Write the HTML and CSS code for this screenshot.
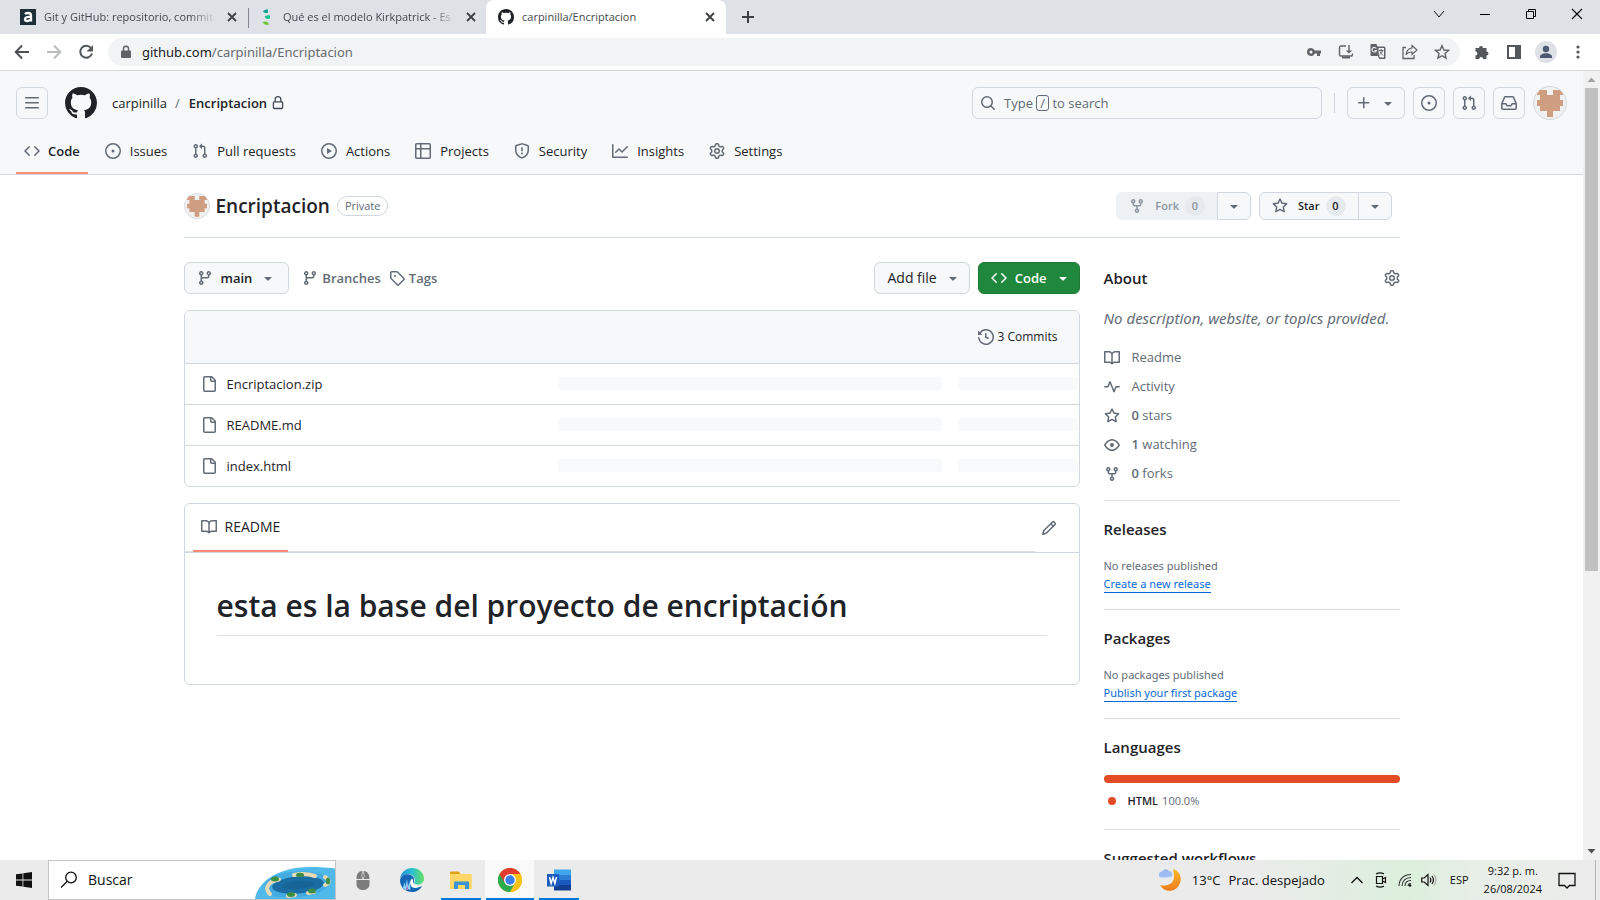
FILE: index.html
```html
<!DOCTYPE html>
<html lang="es">
<head>
<meta charset="utf-8">
<title>carpinilla/Encriptacion</title>
<link rel="stylesheet" href="styles.css">
</head>
<body>
<svg class="sprite" aria-hidden="true">
  <symbol id="menu" viewBox="0 0 16 16"><path d="M1 2.75A.75.75 0 0 1 1.75 2h12.5a.75.75 0 0 1 0 1.5H1.75A.75.75 0 0 1 1 2.75Zm0 5A.75.75 0 0 1 1.75 7h12.5a.75.75 0 0 1 0 1.5H1.75A.75.75 0 0 1 1 7.75ZM1.75 12h12.5a.75.75 0 0 1 0 1.5H1.75a.75.75 0 0 1 0-1.5Z"/></symbol>
  <symbol id="github" viewBox="0 0 16 16"><path d="M8 0c4.42 0 8 3.58 8 8a8.013 8.013 0 0 1-5.45 7.59c-.4.08-.55-.17-.55-.38 0-.27.01-1.13.01-2.2 0-.75-.25-1.23-.54-1.48 1.78-.2 3.65-.88 3.65-3.95 0-.88-.31-1.59-.82-2.15.08-.2.36-1.02-.08-2.12 0 0-.67-.22-2.2.82-.64-.18-1.32-.27-2-.27-.68 0-1.36.09-2 .27-1.53-1.03-2.2-.82-2.2-.82-.44 1.1-.16 1.92-.08 2.12-.51.56-.82 1.28-.82 2.15 0 3.06 1.86 3.75 3.64 3.95-.23.2-.44.55-.51 1.07-.46.21-1.61.55-2.33-.66-.15-.24-.6-.83-1.23-.82-.67.01-.27.38.01.53.34.19.73.9.82 1.13.16.45.68 1.31 2.69.94 0 .67.01 1.3.01 1.49 0 .21-.15.45-.55.38A7.995 7.995 0 0 1 0 8c0-4.42 3.58-8 8-8Z"/></symbol>
  <symbol id="code" viewBox="0 0 16 16"><path d="m11.28 3.22 4.25 4.25a.75.75 0 0 1 0 1.06l-4.25 4.25a.749.749 0 0 1-1.275-.326.749.749 0 0 1 .215-.734L13.94 8l-3.72-3.72a.749.749 0 0 1 .326-1.275.749.749 0 0 1 .734.215Zm-6.56 0a.751.751 0 0 1 1.042.018.751.751 0 0 1 .018 1.042L2.06 8l3.72 3.72a.749.749 0 0 1-.326 1.275.749.749 0 0 1-.734-.215L.47 8.53a.75.75 0 0 1 0-1.06Z"/></symbol>
  <symbol id="issue" viewBox="0 0 16 16"><path d="M8 9.5a1.5 1.5 0 1 0 0-3 1.5 1.5 0 0 0 0 3Z"/><path d="M8 0a8 8 0 1 1 0 16A8 8 0 0 1 8 0ZM1.5 8a6.5 6.5 0 1 0 13 0 6.5 6.5 0 0 0-13 0Z"/></symbol>
  <symbol id="pull" viewBox="0 0 16 16"><path d="M1.5 3.25a2.25 2.25 0 1 1 3 2.122v5.256a2.251 2.251 0 1 1-1.5 0V5.372A2.25 2.25 0 0 1 1.5 3.25Zm5.677-.177L9.573.677A.25.25 0 0 1 10 .854V2.5h1A2.5 2.5 0 0 1 13.5 5v5.628a2.251 2.251 0 1 1-1.5 0V5a1 1 0 0 0-1-1h-1v1.646a.25.25 0 0 1-.427.177L7.177 3.427a.25.25 0 0 1 0-.354ZM3.75 2.5a.75.75 0 1 0 0 1.5.75.75 0 0 0 0-1.5Zm0 9.5a.75.75 0 1 0 0 1.5.75.75 0 0 0 0-1.5Zm8.25.75a.75.75 0 1 0 1.5 0 .75.75 0 0 0-1.5 0Z"/></symbol>
  <symbol id="play" viewBox="0 0 16 16"><path d="M8 0a8 8 0 1 1 0 16A8 8 0 0 1 8 0ZM1.5 8a6.5 6.5 0 1 0 13 0 6.5 6.5 0 0 0-13 0Zm4.879-2.773 4.264 2.559a.25.25 0 0 1 0 .428l-4.264 2.559A.25.25 0 0 1 6 10.559V5.442a.25.25 0 0 1 .379-.215Z"/></symbol>
  <symbol id="table" viewBox="0 0 16 16"><path d="M0 1.75C0 .784.784 0 1.75 0h12.5C15.216 0 16 .784 16 1.75v12.5A1.75 1.75 0 0 1 14.25 16H1.75A1.75 1.75 0 0 1 0 14.25ZM6.5 6.5v8h7.75a.25.25 0 0 0 .25-.25V6.5Zm8-1.5V1.75a.25.25 0 0 0-.25-.25H6.5V5Zm-13 1.5v7.75c0 .138.112.25.25.25H5v-8ZM5 5V1.5H1.75a.25.25 0 0 0-.25.25V5Z"/></symbol>
  <symbol id="shield" viewBox="0 0 16 16"><path d="M7.467.133a1.748 1.748 0 0 1 1.066 0l5.25 1.68A1.75 1.75 0 0 1 15 3.48V7c0 1.566-.32 3.182-1.303 4.682-.983 1.498-2.585 2.813-5.032 3.855a1.697 1.697 0 0 1-1.33 0c-2.447-1.042-4.049-2.357-5.032-3.855C1.32 10.182 1 8.566 1 7V3.48a1.75 1.75 0 0 1 1.217-1.667Zm.61 1.429a.25.25 0 0 0-.153 0l-5.25 1.68a.25.25 0 0 0-.174.238V7c0 1.358.275 2.666 1.057 3.86.784 1.194 2.121 2.34 4.366 3.297a.196.196 0 0 0 .154 0c2.245-.956 3.582-2.104 4.366-3.298C13.225 9.666 13.5 8.36 13.5 7V3.48a.251.251 0 0 0-.174-.237l-5.25-1.68ZM8.75 4.75v3a.75.75 0 0 1-1.5 0v-3a.75.75 0 0 1 1.5 0ZM9 10.5a1 1 0 1 1-2 0 1 1 0 0 1 2 0Z"/></symbol>
  <symbol id="graph" viewBox="0 0 16 16"><path d="M1.5 1.75V13.5h13.75a.75.75 0 0 1 0 1.5H.75a.75.75 0 0 1-.75-.75V1.75a.75.75 0 0 1 1.5 0Zm14.28 2.53-5.25 5.25a.75.75 0 0 1-1.06 0L7 7.06 4.28 9.78a.751.751 0 0 1-1.042-.018.751.751 0 0 1-.018-1.042l3.25-3.25a.75.75 0 0 1 1.06 0L10 7.94l4.72-4.72a.751.751 0 0 1 1.042.018.751.751 0 0 1 .018 1.042Z"/></symbol>
  <symbol id="gear" viewBox="0 0 16 16"><path d="M8 0a8.2 8.2 0 0 1 .701.031C9.444.095 9.99.645 10.16 1.29l.288 1.107c.018.066.079.158.212.224.231.114.454.243.668.386.123.082.233.09.299.071l1.103-.303c.644-.176 1.392.021 1.82.63.27.385.506.792.704 1.218.315.675.111 1.422-.364 1.891l-.814.806c-.049.048-.098.147-.088.294.016.257.016.515 0 .772-.01.147.038.246.088.294l.814.806c.475.469.679 1.216.364 1.891a7.977 7.977 0 0 1-.704 1.217c-.428.61-1.176.807-1.82.63l-1.102-.302c-.067-.019-.177-.011-.3.071a5.909 5.909 0 0 1-.668.386c-.133.066-.194.158-.211.224l-.29 1.106c-.168.646-.715 1.196-1.458 1.26a8.006 8.006 0 0 1-1.402 0c-.743-.064-1.289-.614-1.458-1.26l-.289-1.106c-.018-.066-.079-.158-.212-.224a5.738 5.738 0 0 1-.668-.386c-.123-.082-.233-.09-.299-.071l-1.103.303c-.644.176-1.392-.021-1.82-.63a8.12 8.12 0 0 1-.704-1.218c-.315-.675-.111-1.422.363-1.891l.815-.806c.05-.048.098-.147.088-.294a6.214 6.214 0 0 1 0-.772c.01-.147-.038-.246-.088-.294l-.815-.806C.635 6.045.431 5.298.746 4.623a7.92 7.92 0 0 1 .704-1.217c.428-.61 1.176-.807 1.82-.63l1.102.302c.067.019.177.011.3-.071.214-.143.437-.272.668-.386.133-.066.194-.158.211-.224l.29-1.106C6.009.645 6.556.095 7.299.03 7.53.01 7.764 0 8 0Zm-.571 1.525c-.036.003-.108.036-.137.146l-.289 1.105c-.147.561-.549.967-.998 1.189-.173.086-.34.183-.5.29-.417.278-.97.423-1.529.27l-1.103-.303c-.109-.03-.175.016-.195.045-.22.312-.412.644-.573.99-.014.031-.021.11.059.19l.815.806c.411.406.562.957.53 1.456a4.709 4.709 0 0 0 0 .582c.032.499-.119 1.05-.53 1.456l-.815.806c-.081.08-.073.159-.059.19.162.346.353.677.573.989.02.03.085.076.195.046l1.102-.303c.56-.153 1.113-.008 1.53.27.161.107.328.204.501.29.447.222.85.629.997 1.189l.289 1.105c.029.109.101.143.137.146a6.6 6.6 0 0 0 1.142 0c.036-.003.108-.036.137-.146l.289-1.105c.147-.561.549-.967.998-1.189.173-.086.34-.183.5-.29.417-.278.97-.423 1.529-.27l1.103.303c.109.029.175-.016.195-.045.22-.313.411-.644.573-.99.014-.031.021-.11-.059-.19l-.815-.806c-.411-.406-.562-.957-.53-1.456a4.709 4.709 0 0 0 0-.582c-.032-.499.119-1.05.53-1.456l.815-.806c.081-.08.073-.159.059-.19a6.464 6.464 0 0 0-.573-.989c-.02-.03-.085-.076-.195-.046l-1.102.303c-.56.153-1.113.008-1.53-.27a4.44 4.44 0 0 0-.501-.29c-.447-.222-.85-.629-.997-1.189l-.289-1.105c-.029-.11-.101-.143-.137-.146a6.6 6.6 0 0 0-1.142 0ZM11 8a3 3 0 1 1-6 0 3 3 0 0 1 6 0ZM9.5 8a1.5 1.5 0 1 0-3.001.001A1.5 1.5 0 0 0 9.5 8Z"/></symbol>
  <symbol id="lock" viewBox="0 0 16 16"><path d="M4 4a4 4 0 0 1 8 0v2h.25c.966 0 1.75.784 1.75 1.75v5.5A1.75 1.75 0 0 1 12.25 15h-8.5A1.75 1.75 0 0 1 2 13.25v-5.5C2 6.784 2.784 6 3.75 6H4Zm8.25 3.5h-8.5a.25.25 0 0 0-.25.25v5.5c0 .138.112.25.25.25h8.5a.25.25 0 0 0 .25-.25v-5.5a.25.25 0 0 0-.25-.25ZM10.5 6V4a2.5 2.5 0 1 0-5 0v2Z"/></symbol>
  <symbol id="inbox" viewBox="0 0 16 16"><path d="M2.8 2.06A1.75 1.75 0 0 1 4.41 1h7.18c.7 0 1.333.417 1.61 1.06l2.74 6.395c.04.093.06.194.06.295v4.5A1.75 1.75 0 0 1 14.25 15H1.75A1.75 1.75 0 0 1 0 13.25v-4.5c0-.101.02-.202.06-.295Zm1.61.44a.25.25 0 0 0-.23.152L1.887 8H4.75a.75.75 0 0 1 .6.3L6.625 10h2.75l1.275-1.7a.75.75 0 0 1 .6-.3h2.863L11.82 2.652a.25.25 0 0 0-.23-.152Zm10.09 7h-2.875l-1.275 1.7a.75.75 0 0 1-.6.3h-3.5a.75.75 0 0 1-.6-.3L4.375 9.5H1.5v3.75c0 .138.112.25.25.25h12.5a.25.25 0 0 0 .25-.25Z"/></symbol>
  <symbol id="search" viewBox="0 0 16 16"><path d="M10.68 11.74a6 6 0 0 1-7.922-8.982 6 6 0 0 1 8.982 7.922l3.04 3.04a.749.749 0 0 1-.326 1.275.749.749 0 0 1-.734-.215ZM11.5 7a4.499 4.499 0 1 0-8.997 0A4.499 4.499 0 0 0 11.5 7Z"/></symbol>
  <symbol id="plus" viewBox="0 0 16 16"><path d="M7.75 2a.75.75 0 0 1 .75.75V7h4.25a.75.75 0 0 1 0 1.5H8.5v4.25a.75.75 0 0 1-1.5 0V8.5H2.75a.75.75 0 0 1 0-1.5H7V2.75A.75.75 0 0 1 7.75 2Z"/></symbol>
  <symbol id="caret" viewBox="0 0 16 16"><path d="m4.427 7.427 3.396 3.396a.25.25 0 0 0 .354 0l3.396-3.396A.25.25 0 0 0 11.396 7H4.604a.25.25 0 0 0-.177.427Z"/></symbol>
  <symbol id="fork" viewBox="0 0 16 16"><path d="M5 5.372v.878c0 .414.336.75.75.75h4.5a.75.75 0 0 0 .75-.75v-.878a2.25 2.25 0 1 1 1.5 0v.878a2.25 2.25 0 0 1-2.25 2.25h-1.5v2.128a2.251 2.251 0 1 1-1.5 0V8.5h-1.5A2.25 2.25 0 0 1 3.5 6.25v-.878a2.25 2.25 0 1 1 1.5 0ZM5 3.25a.75.75 0 1 0-1.5 0 .75.75 0 0 0 1.5 0Zm6.75.75a.75.75 0 1 0 0-1.5.75.75 0 0 0 0 1.5Zm-3 8.75a.75.75 0 1 0-1.5 0 .75.75 0 0 0 1.5 0Z"/></symbol>
  <symbol id="star" viewBox="0 0 16 16"><path d="M8 .25a.75.75 0 0 1 .673.418l1.882 3.815 4.21.612a.75.75 0 0 1 .416 1.279l-3.046 2.97.719 4.192a.751.751 0 0 1-1.088.791L8 12.347l-3.766 1.98a.75.75 0 0 1-1.088-.79l.72-4.194L.818 6.374a.75.75 0 0 1 .416-1.28l4.21-.611L7.327.668A.75.75 0 0 1 8 .25Zm0 2.445L6.615 5.5a.75.75 0 0 1-.564.41l-3.097.45 2.24 2.184a.75.75 0 0 1 .216.664l-.528 3.084 2.769-1.456a.75.75 0 0 1 .698 0l2.77 1.456-.53-3.084a.75.75 0 0 1 .216-.664l2.24-2.183-3.096-.45a.75.75 0 0 1-.564-.41L8 2.694Z"/></symbol>
  <symbol id="branch" viewBox="0 0 16 16"><path d="M9.5 3.25a2.25 2.25 0 1 1 3 2.122V6A2.5 2.5 0 0 1 10 8.5H6a1 1 0 0 0-1 1v1.128a2.251 2.251 0 1 1-1.5 0V5.372a2.25 2.25 0 1 1 1.5 0v1.836A2.493 2.493 0 0 1 6 7h4a1 1 0 0 0 1-1v-.628A2.25 2.25 0 0 1 9.5 3.25Zm-6 0a.75.75 0 1 0 1.5 0 .75.75 0 0 0-1.5 0Zm8.25-.75a.75.75 0 1 0 0 1.5.75.75 0 0 0 0-1.5ZM4.25 12a.75.75 0 1 0 0 1.5.75.75 0 0 0 0-1.5Z"/></symbol>
  <symbol id="tag" viewBox="0 0 16 16"><path d="M1 7.775V2.75C1 1.784 1.784 1 2.75 1h5.025c.464 0 .91.184 1.238.513l6.25 6.25a1.75 1.75 0 0 1 0 2.474l-5.026 5.026a1.75 1.75 0 0 1-2.474 0l-6.25-6.25A1.752 1.752 0 0 1 1 7.775Zm1.5 0c0 .066.026.13.073.177l6.25 6.25a.25.25 0 0 0 .354 0l5.025-5.025a.25.25 0 0 0 0-.354l-6.25-6.25a.25.25 0 0 0-.177-.073H2.75a.25.25 0 0 0-.25.25ZM6 5a1 1 0 1 1 0 2 1 1 0 0 1 0-2Z"/></symbol>
  <symbol id="history" viewBox="0 0 16 16"><path d="m.427 1.927 1.215 1.215a8.002 8.002 0 1 1-1.6 5.685.75.75 0 1 1 1.493-.154 6.5 6.5 0 1 0 1.18-4.458l1.358 1.358A.25.25 0 0 1 3.896 6H.25A.25.25 0 0 1 0 5.75V2.104a.25.25 0 0 1 .427-.177ZM7.75 4a.75.75 0 0 1 .75.75v2.992l2.028.812a.75.75 0 0 1-.557 1.392l-2.5-1A.751.751 0 0 1 7 8.25v-3.5A.75.75 0 0 1 7.75 4Z"/></symbol>
  <symbol id="file" viewBox="0 0 16 16"><path d="M2 1.75C2 .784 2.784 0 3.75 0h6.586c.464 0 .909.184 1.237.513l2.914 2.914c.329.328.513.773.513 1.237v9.586A1.75 1.75 0 0 1 13.25 16h-9.5A1.75 1.75 0 0 1 2 14.25Zm1.75-.25a.25.25 0 0 0-.25.25v12.5c0 .138.112.25.25.25h9.5a.25.25 0 0 0 .25-.25V6h-2.75A1.75 1.75 0 0 1 9 4.25V1.5Zm6.75.062V4.25c0 .138.112.25.25.25h2.688l-.011-.013-2.914-2.914-.013-.011Z"/></symbol>
  <symbol id="book" viewBox="0 0 16 16"><path d="M0 1.75A.75.75 0 0 1 .75 1h4.253c1.227 0 2.317.59 3 1.501A3.743 3.743 0 0 1 11.006 1h4.245a.75.75 0 0 1 .75.75v10.5a.75.75 0 0 1-.75.75h-4.507a2.25 2.25 0 0 0-1.591.659l-.622.621a.75.75 0 0 1-1.06 0l-.622-.621A2.25 2.25 0 0 0 5.258 13H.75a.75.75 0 0 1-.75-.75Zm7.251 10.324.004-5.073-.002-2.253A2.25 2.25 0 0 0 5.003 2.5H1.5v9h3.757a3.75 3.75 0 0 1 1.994.574ZM8.755 4.75l-.004 7.322a3.752 3.752 0 0 1 1.992-.572H14.5v-9h-3.495a2.25 2.25 0 0 0-2.25 2.25Z"/></symbol>
  <symbol id="pencil" viewBox="0 0 16 16"><path d="M11.013 1.427a1.75 1.75 0 0 1 2.474 0l1.086 1.086a1.75 1.75 0 0 1 0 2.474l-8.61 8.61c-.21.21-.47.364-.756.445l-3.251.93a.75.75 0 0 1-.927-.928l.929-3.25c.081-.286.235-.547.445-.758l8.61-8.61Zm.176 4.823L9.75 4.81l-6.286 6.287a.253.253 0 0 0-.064.108l-.558 1.953 1.953-.558a.253.253 0 0 0 .108-.064Zm1.238-3.763a.25.25 0 0 0-.354 0L10.811 3.75l1.439 1.44 1.263-1.263a.25.25 0 0 0 0-.354Z"/></symbol>
  <symbol id="pulse" viewBox="0 0 16 16"><path d="M6 2c.306 0 .582.187.696.471L10 10.731l1.304-3.26A.751.751 0 0 1 12 7h3.25a.75.75 0 0 1 0 1.5h-2.742l-1.812 4.528a.751.751 0 0 1-1.392 0L6 4.77 4.696 8.03A.75.75 0 0 1 4 8.5H.75a.75.75 0 0 1 0-1.5h2.742l1.812-4.529A.751.751 0 0 1 6 2Z"/></symbol>
  <symbol id="eye" viewBox="0 0 16 16"><path d="M8 2c1.981 0 3.671.992 4.933 2.078 1.27 1.091 2.187 2.345 2.637 3.023a1.62 1.62 0 0 1 0 1.798c-.45.678-1.367 1.932-2.637 3.023C11.67 13.008 9.981 14 8 14c-1.981 0-3.671-.992-4.933-2.078C1.797 10.83.88 9.576.43 8.898a1.62 1.62 0 0 1 0-1.798c.45-.677 1.367-1.931 2.637-3.022C4.33 2.992 6.019 2 8 2ZM1.679 7.932a.12.12 0 0 0 0 .136c.411.622 1.241 1.75 2.366 2.717C5.176 11.758 6.527 12.5 8 12.5c1.473 0 2.825-.742 3.955-1.715 1.124-.967 1.954-2.096 2.366-2.717a.12.12 0 0 0 0-.136c-.412-.621-1.242-1.75-2.366-2.717C10.824 4.242 9.473 3.5 8 3.5c-1.473 0-2.825.742-3.955 1.715-1.124.967-1.954 2.096-2.366 2.717ZM8 10a2 2 0 1 1-.001-3.999A2 2 0 0 1 8 10Z"/></symbol>
  <symbol id="cross" viewBox="0 0 16 16"><path d="m4 4 8 8M12 4l-8 8" fill="none" stroke="currentColor" stroke-width="1.8"/></symbol>
  <symbol id="identicon" viewBox="0 0 34 34"><circle cx="17" cy="17" r="16.5" fill="#f0f0f0" stroke="#d4d8dc"/><path fill="#cf9d80" d="M7 4h7v5h6V4h7l3 4v1h-3v5h3v6h-3v5h-7v6h-6v-6H7v-5H4v-6h3V9H4V8Z"/></symbol>
</svg>

<div class="tabstrip">
  <div class="tab">
    <svg class="i16" viewBox="0 0 16 16"><rect width="16" height="16" fill="#1d2f3a"/><path d="M5 5.2C6 3.600 11 3.200 11 6.500V12.500M11 8C7 7.500 4.900 8.500 5 10.300 5.200 12.600 9.500 12.600 11 10" fill="none" stroke="#fff" stroke-width="2.300"/></svg>
    <span class="tab-title faded">Git y GitHub: repositorio, commit</span>
    <button class="tab-close" aria-label="Cerrar"><svg class="i16"><use href="#cross"/></svg></button>
  </div>
  <div class="tab tab-second">
    <svg class="i16" viewBox="0 0 16 16"><path d="M2 2.200C4 .2 6 .2 7 .6V3.500C5 4.500 3 4 2 2.200Z" fill="#0da192"/><path d="M3.500 8C5 6 7.500 6 9 6.500V9.500C7 10.500 5 10 3.500 8Z" fill="#12c48d"/><path d="M1.500 13.300C3 12 6 12.300 7.500 14V16C5 16 2.500 15.500 1.500 13.300Z" fill="#6bc62e"/></svg>
    <span class="tab-title faded">Qué es el modelo Kirkpatrick - Es</span>
    <button class="tab-close" aria-label="Cerrar"><svg class="i16"><use href="#cross"/></svg></button>
  </div>
  <div class="tab tab-active">
    <svg class="i16 dark"><use href="#github"/></svg>
    <span class="tab-title">carpinilla/Encriptacion</span>
    <button class="tab-close" aria-label="Cerrar"><svg class="i16"><use href="#cross"/></svg></button>
  </div>
  <button class="new-tab" aria-label="Nueva pestaña"><svg class="i16" viewBox="0 0 16 16"><path d="M8 2v12M2 8h12" fill="none" stroke="#3c4043" stroke-width="2"/></svg></button>
  <div class="window-controls">
    <button aria-label="Buscar pestañas"><svg class="i16" viewBox="0 0 16 16"><path d="m3 5 5 6 5-6" fill="none" stroke="#111" stroke-width="1"/></svg></button>
    <button aria-label="Minimizar"><svg class="i16" viewBox="0 0 16 16"><path d="M3 8.500h10" stroke="#000"/></svg></button>
    <button aria-label="Restaurar"><svg class="i16" viewBox="0 0 16 16"><path d="M3.500 5.500h7v7h-7ZM5.500 5V3.500h7v7H11" fill="none" stroke="#000"/></svg></button>
    <button aria-label="Cerrar ventana"><svg class="i16" viewBox="0 0 16 16"><path d="m3 3 10 10M13 3 3 13" fill="none" stroke="#000" stroke-width="1.100"/></svg></button>
  </div>
</div>

<div class="toolbar">
  <button class="tool" aria-label="Atrás"><svg class="i16" viewBox="0 0 16 16"><path d="M15 8H2M8 1.500 1.700 8 8 14.500" fill="none" stroke="#4b4f54" stroke-width="1.900"/></svg></button>
  <button class="tool" aria-label="Adelante"><svg class="i16" viewBox="0 0 16 16"><path d="M1 8h13M8 1.500 14.300 8 8 14.500" fill="none" stroke="#b9bbbd" stroke-width="1.900"/></svg></button>
  <button class="tool" aria-label="Recargar"><svg class="i16" viewBox="0 0 16 16"><path d="M13 4A6 6 0 1 0 14 9.500" fill="none" stroke="#54585c" stroke-width="2"/><path d="M15 1v6.500H8.500Z" fill="#54585c"/></svg></button>
  <div class="omnibox">
    <svg class="i14" viewBox="0 0 14 14"><path d="M3 5.500h8a1 1 0 0 1 1 1v5.500a1 1 0 0 1-1 1H3a1 1 0 0 1-1-1V6.500a1 1 0 0 1 1-1Z" fill="#5f6368"/><path d="M4.500 6V3.800a2.500 2.500 0 0 1 5 0V6" fill="none" stroke="#5f6368" stroke-width="1.400"/></svg>
    <span class="url">github.com<span class="path">/carpinilla/Encriptacion</span></span>
    <button aria-label="Contraseñas"><svg class="i16" viewBox="0 0 16 16"><path fill="#5f6368" fill-rule="evenodd" d="M5 4a4 4 0 0 1 3.700 2.500H15v3h-1V12h-3V9.500H8.700A4 4 0 1 1 5 4Zm0 2.500a1.500 1.500 0 1 0 0 3 1.500 1.500 0 0 0 0-3Z"/></svg></button>
    <button aria-label="Instalar"><svg class="i16" viewBox="0 0 16 16"><path d="M8 2H3a1.500 1.500 0 0 0-1.500 1.500v7A1.500 1.500 0 0 0 3 12h10a1.500 1.500 0 0 0 1.500-1.500V9.500" fill="none" stroke="#5f6368" stroke-width="1.400"/><path d="M4 12.500h8v2H4ZM10.300 1h1.400v5.500h2.500L11 9.500 7.800 6.500h2.500Z" fill="#5f6368"/></svg></button>
    <button aria-label="Traducir"><svg class="i16" viewBox="0 0 16 16"><path d="M1.500 0h5l1 2.500H14a1.500 1.500 0 0 1 1.500 1.500v10a1 1 0 0 1-1 1H9L8 12H1.500A1 1 0 0 1 .5 11V1a1 1 0 0 1 1-1Z" fill="#5f6368"/><path d="M8.500 4H14v9.500H9.800L8.800 11Z" fill="#f1f3f4"/><path d="M9 6.500h4.500M11.200 5v1.500M12.500 6.500C12 9 10.500 10 9.500 11M10 7.500c.5 1.500 2 3 3 4" fill="none" stroke="#5f6368"/><path d="M6.300 4.500A2.300 2.300 0 1 0 6.500 6.500H4.500" fill="none" stroke="#f1f3f4" stroke-width="1.100"/></svg></button>
    <button aria-label="Compartir"><svg class="i16" viewBox="0 0 16 16"><path d="M4 3.500H1v11h11V11" fill="none" stroke="#5f6368" stroke-width="1.300"/><path d="M10 1.500 15 6l-5 4.500V8C7.500 8 5.500 8.500 4 11 4.300 7 6.500 4.500 10 4Z" fill="none" stroke="#5f6368" stroke-width="1.200"/></svg></button>
    <button aria-label="Marcar"><svg class="i16" viewBox="0 0 16 16"><path d="m8 1.700 1.900 4.300 4.600.4-3.500 3.100 1 4.600L8 11.700l-4 2.400 1-4.600L1.500 6.400 6.100 6Z" fill="none" stroke="#5f6368" stroke-width="1.400"/></svg></button>
  </div>
  <button class="tool" aria-label="Extensiones"><svg class="i16" viewBox="0 0 16 16"><path fill="#54585d" d="M1.500 4H5a2 2 0 1 1 4 0h3.500v3.500a2 2 0 1 1 0 4V15H9a1.900 1.900 0 0 0-3.800 0H1.500v-3.600a1.900 1.900 0 0 0 0-3.800Z"/></svg></button>
  <button class="tool" aria-label="Panel lateral"><svg class="i16" viewBox="0 0 16 16"><path fill="#54585d" fill-rule="evenodd" d="M1 1h14v14H1Zm2 2v10h6V3Z"/></svg></button>
  <button class="tool" aria-label="Perfil"><svg class="i22" viewBox="0 0 22 22"><circle cx="11" cy="11" r="11" fill="#dee1e6"/><circle cx="11" cy="8" r="3.200" fill="#4d5a70"/><path d="M5 16c0-5 12-5 12 0v1H5Z" fill="#4d5a70"/></svg></button>
  <button class="tool" aria-label="Menú"><svg class="i16" viewBox="0 0 16 16"><g fill="#54585d"><circle cx="8" cy="3" r="1.600"/><circle cx="8" cy="8" r="1.600"/><circle cx="8" cy="13" r="1.600"/></g></svg></button>
</div>

<div class="viewport">
  <div class="page">
    <header class="gh-header">
      <div class="gh-top">
        <button class="box-btn" aria-label="Menu"><svg class="i16"><use href="#menu"/></svg></button>
        <a class="logo" href="#" aria-label="GitHub"><svg class="i32 dark"><use href="#github"/></svg></a>
        <nav class="crumbs"><a href="#">carpinilla</a><span class="slash">/</span><a class="strong" href="#">Encriptacion</a><svg class="i14"><use href="#lock"/></svg></nav>
        <button class="search"><svg class="i16"><use href="#search"/></svg><span>Type <kbd>/</kbd> to search</span></button>
        <span class="rule"></span>
        <button class="box-btn create" aria-label="Create new"><svg class="i16"><use href="#plus"/></svg><svg class="i16"><use href="#caret"/></svg></button>
        <button class="box-btn" aria-label="Issues"><svg class="i16"><use href="#issue"/></svg></button>
        <button class="box-btn" aria-label="Pull requests"><svg class="i16"><use href="#pull"/></svg></button>
        <button class="box-btn" aria-label="Inbox"><svg class="i16"><use href="#inbox"/></svg></button>
        <button class="account" aria-label="Account"><svg class="i34"><use href="#identicon"/></svg></button>
      </div>
      <nav class="gh-nav">
        <a class="current" href="#"><svg class="i16"><use href="#code"/></svg>Code</a>
        <a href="#"><svg class="i16"><use href="#issue"/></svg>Issues</a>
        <a href="#"><svg class="i16"><use href="#pull"/></svg>Pull requests</a>
        <a href="#"><svg class="i16"><use href="#play"/></svg>Actions</a>
        <a href="#"><svg class="i16"><use href="#table"/></svg>Projects</a>
        <a href="#"><svg class="i16"><use href="#shield"/></svg>Security</a>
        <a href="#"><svg class="i16"><use href="#graph"/></svg>Insights</a>
        <a href="#"><svg class="i16"><use href="#gear"/></svg>Settings</a>
      </nav>
    </header>

    <div class="container">
      <div class="repo-head">
        <svg class="i26"><use href="#identicon"/></svg>
        <a class="repo-name" href="#">Encriptacion</a>
        <span class="pill">Private</span>
        <div class="split">
          <button class="small-btn" disabled><svg class="i16"><use href="#fork"/></svg>Fork<span class="count">0</span></button><button class="small-btn drop" aria-label="Forks"><svg class="i16"><use href="#caret"/></svg></button>
        </div>
        <div class="split">
          <button class="small-btn"><svg class="i16"><use href="#star"/></svg>Star<span class="count">0</span></button><button class="small-btn drop" aria-label="Lists"><svg class="i16"><use href="#caret"/></svg></button>
        </div>
      </div>

      <div class="columns">
        <main class="main">
          <div class="actions">
            <button class="btn"><svg class="i16"><use href="#branch"/></svg><span>main</span><svg class="i16"><use href="#caret"/></svg></button>
            <a class="ref-link branches" href="#"><svg class="i16"><use href="#branch"/></svg>Branches</a>
            <a class="ref-link" href="#"><svg class="i16"><use href="#tag"/></svg>Tags</a>
            <button class="btn add"><span>Add file</span><svg class="i16"><use href="#caret"/></svg></button>
            <button class="btn primary"><svg class="i16"><use href="#code"/></svg><span>Code</span><svg class="i16"><use href="#caret"/></svg></button>
          </div>

          <div class="panel">
            <table class="files">
              <colgroup><col class="c-name"><col><col class="c-date"></colgroup>
              <thead><tr><th colspan="3"><a class="commits" href="#"><svg class="i16"><use href="#history"/></svg>3 Commits</a></th></tr></thead>
              <tbody>
                <tr><td class="name"><a href="#"><svg class="i16"><use href="#file"/></svg>Encriptacion.zip</a></td><td class="msg"><div class="skeleton"></div></td><td class="date"><div class="skeleton"></div></td></tr>
                <tr><td class="name"><a href="#"><svg class="i16"><use href="#file"/></svg>README.md</a></td><td class="msg"><div class="skeleton"></div></td><td class="date"><div class="skeleton"></div></td></tr>
                <tr><td class="name"><a href="#"><svg class="i16"><use href="#file"/></svg>index.html</a></td><td class="msg"><div class="skeleton"></div></td><td class="date"><div class="skeleton"></div></td></tr>
              </tbody>
            </table>
          </div>

          <div class="panel readme">
            <div class="readme-head">
              <div class="readme-tabs"><a href="#"><svg class="i16"><use href="#book"/></svg>README</a></div>
              <button class="plain" aria-label="Edit file"><svg class="i16"><use href="#pencil"/></svg></button>
            </div>
            <article><h1>esta es la base del proyecto de encriptación</h1></article>
          </div>
        </main>

        <aside class="side">
          <section>
            <div class="about-head"><h2>About</h2><button class="plain" aria-label="Edit repository details"><svg class="i16"><use href="#gear"/></svg></button></div>
            <p class="desc">No description, website, or topics provided.</p>
            <ul class="facts">
              <li><a href="#"><svg class="i16"><use href="#book"/></svg>Readme</a></li>
              <li><a href="#"><svg class="i16"><use href="#pulse"/></svg>Activity</a></li>
              <li><a href="#"><svg class="i16"><use href="#star"/></svg><span><b>0</b> stars</span></a></li>
              <li><a href="#"><svg class="i16"><use href="#eye"/></svg><span><b>1</b> watching</span></a></li>
              <li><a href="#"><svg class="i16"><use href="#fork"/></svg><span><b>0</b> forks</span></a></li>
            </ul>
          </section>
          <section><h2>Releases</h2><p class="note">No releases published</p><a class="link" href="#">Create a new release</a></section>
          <section><h2>Packages</h2><p class="note">No packages published</p><a class="link" href="#">Publish your first package</a></section>
          <section class="langs"><h2>Languages</h2><div class="bar"></div><p class="lang"><span class="dot"></span><b>HTML</b> 100.0%</p></section>
          <section><h2>Suggested workflows</h2></section>
        </aside>
      </div>
    </div>
  </div>
  <div class="scrollbar">
    <svg viewBox="0 0 17 17"><path d="m4.500 11 4-4.500 4 4.500Z" fill="#a3a3a3"/></svg>
    <div class="track"><div class="thumb"></div></div>
    <svg viewBox="0 0 17 17"><path d="m4.500 6 4 4.500 4-4.500Z" fill="#505050"/></svg>
  </div>
</div>

<div class="taskbar">
  <button class="start" aria-label="Inicio"><svg class="i16" viewBox="0 0 16 16"><path d="M0 2.300 6.500 1.400V7.600H0ZM7.300 1.300 16 0v7.600H7.300ZM0 8.400h6.500v6.200L0 13.700ZM7.300 8.400H16V16l-8.700-1.300Z"/></svg></button>
  <button class="task-search">
    <svg class="i18" viewBox="0 0 18 18"><circle cx="11" cy="6.500" r="5.300" fill="none" stroke="#111" stroke-width="1.300"/><path d="M7 10.500 1 16.500" stroke="#111" stroke-width="1.300"/></svg>
    <span>Buscar</span>
    <svg class="lagoon" viewBox="0 0 80 32">
      <path d="M0 32C2 16 22 0 55 0c10 0 18 .5 25 1.500V32Z" fill="#4fb9ea"/>
      <path d="M10 23C7 12 22 6 38 5 58 3 74 8 75 14 76 21 62 29 42 30 24 31 13 30 10 23Z" fill="#43aae2"/>
      <ellipse cx="43" cy="18" rx="26" ry="8.500" fill="#1a6da2" transform="rotate(-5 43 18)"/>
      <ellipse cx="43" cy="18" rx="16" ry="4" fill="#176496" transform="rotate(-5 43 18)"/>
      <g fill="none" stroke="#e9d9b4" stroke-width="4" stroke-linecap="round"><path d="M15 27C10 22 11 15 24 12.500"/><path d="M39 8C47 6 54 7 60 9"/><path d="M70 10C75 13 75 16 70 18"/><path d="m33 29 7-1M53 26l6-1"/></g>
      <g fill="#3d8e45"><ellipse cx="20" cy="12" rx="4" ry="2.500"/><ellipse cx="45" cy="8" rx="4" ry="2.200"/><ellipse cx="73" cy="14" rx="2.200" ry="3.500"/><ellipse cx="36" cy="27.500" rx="4" ry="2.500"/><ellipse cx="57" cy="24" rx="4" ry="2.500"/></g>
    </svg>
  </button>
  <div class="apps">
    <button aria-label="Mouse"><svg viewBox="0 0 24 24"><path d="M11.400 3v8H5.500C5.500 6 7.500 3 11.400 3ZM12.600 3v8h5.900C18.500 6 16.500 3 12.600 3ZM5.500 12h13v4c0 8-13 8-13 0Z" fill="#7c7c7c"/><rect x="10.800" y="5" width="2.400" height="5" rx="1.200" fill="#7c7c7c" stroke="#ebebeb" stroke-width=".6"/></svg></button>
    <button aria-label="Edge"><svg viewBox="0 0 24 24">
      <defs><linearGradient id="eg" x2="1"><stop stop-color="#1b8fe0"/><stop offset=".5" stop-color="#2cc0cf"/><stop offset="1" stop-color="#66e063"/></linearGradient></defs>
      <path d="M0 11C1 4 6 0 12 0c7 0 12 5 12 10.500 0 4-3 6-6 6s-4-1-3.500-2.500C16 9 12 6 8 6 4 6 1 8 0 11Z" fill="url(#eg)"/>
      <path d="M0 12C1 8 4 6 8 6.200c4 .3 6.500 3 6 6-1 6 4 8.300 8 5.800C20 22 16 24 12 24 5 24 0 19 0 12Z" fill="#1466b4"/>
      <path d="m3 20 1.500-6 .8 5L7 11l1 8 1.500-6 1 9-2.500-1-1-2-1.500 3Z" fill="#8fd9ff"/><path d="m6 22 1.200-7 .6 7Z" fill="#c678c8"/><path d="M12 10.500c-2.500 2.500-2.500 6.500.5 9 3 1 6 .3 8-1.500-4 .5-8-1.500-7.500-6Z" fill="#fff"/></svg></button>
    <button class="open inset" aria-label="Explorador"><svg viewBox="0 0 24 24"><path d="M1 4.500a1 1 0 0 1 1-1h8l1.500 2.500H1Z" fill="#dfa117"/><path d="M1 6h21a.8.800 0 0 1 .8.800V20a1 1 0 0 1-1 1H2a1 1 0 0 1-1-1Z" fill="#ffd767"/><path d="M5 21v-6.500a1 1 0 0 1 1-1h13a1 1 0 0 1 1 1V21h-4v-4H9v4Z" fill="#3b94d4"/></svg></button>
    <button class="open active" aria-label="Chrome"><svg viewBox="0 0 24 24"><circle cx="12" cy="12" r="12" fill="#fbc116"/><path d="M12 12 1.600 6A12 12 0 0 0 12 24l5.200-9Z" fill="#2da94f"/><path d="M1.600 6A12 12 0 0 1 22.400 6H12l-5.200 9Z" fill="#e33b2e"/><path d="M12 24A12 12 0 0 0 22.400 6H12l5.200 9Z" fill="#fbc116"/><circle cx="12" cy="12" r="6" fill="#fff"/><circle cx="12" cy="12" r="4.700" fill="#3b7de9"/></svg></button>
    <button class="open inset" aria-label="Word"><svg viewBox="0 0 24 24"><path d="M7 1.500h17V7H7Z" fill="#41a5ee"/><path d="M7 7h17v5H7Z" fill="#2b7cd3"/><path d="M7 12h17v5H7Z" fill="#185abd"/><path d="M7 17h17v5.500H7Z" fill="#103f91"/><path d="M0 6h12v12.500H0Z" fill="#1b5cbe"/><path d="m2.500 9 1.600 6.500L6 9.500l1.900 6L9.500 9" fill="none" stroke="#fff" stroke-width="1.500"/></svg></button>
  </div>
  <div class="tray">
    <svg class="weather" viewBox="0 0 24 24"><defs><linearGradient id="mg" y2="1" x2="0"><stop stop-color="#fbb829"/><stop offset="1" stop-color="#ee7b1b"/></linearGradient></defs><path d="M15 1C22 3 24 10 22 15 19 24 7 26 2 17c6 2 14-1 14-8 0-3-.5-6-1-8Z" fill="url(#mg)"/><path d="M3.500 10a3.300 3.300 0 0 1 .5-6.500A4 4 0 0 1 11 3a3.600 3.600 0 0 1 1 7Z" fill="#9dbdf0"/><path d="M2 8.500C6 10 10 9.500 14 7.500L12 10H3.500Z" fill="#d5e4fb"/></svg>
    <span class="temp">13°C</span><span class="sky">Prac. despejado</span>
    <svg class="i16" viewBox="0 0 16 16"><path d="m2.500 11 5.500-5.500 5.500 5.500" fill="none" stroke="#111" stroke-width="1.300"/></svg>
    <svg class="i16" viewBox="0 0 16 16"><path d="M3.500 4.500h6v7h-6ZM9.500 7l3-1.500v5l-3-1.500M3 2c2.500-1.500 5.500-1.500 8 0M3 14c2.500 1.500 5.500 1.500 8 0" fill="none" stroke="#111" stroke-width="1.200"/></svg>
    <svg class="i16" viewBox="0 0 16 16"><path d="M2 14C2 7 7 2.500 14 2.500M5 14c0-5 3.500-8.500 9-8.500M8 14c0-3.500 2.500-5.500 6-5.500M11 14c0-1.500 1-2.500 3-2.500" fill="none" stroke="#333" stroke-width="1.100"/><circle cx="13" cy="13.500" r="1.300"/></svg>
    <svg class="i16" viewBox="0 0 16 16"><path d="M.7 6h2.500L7 2.500v11L3.200 10H.7ZM9 5.500c1 1.500 1 3.500 0 5M11 4c1.800 2.500 1.800 5.500 0 8" fill="none" stroke="#111" stroke-width="1.200"/><path d="M13 2.500c2.500 3.500 2.500 7.500 0 11" fill="none" stroke="#999"/></svg>
    <span class="lang-code">ESP</span>
    <span class="clock">9:32 p. m.<br>26/08/2024</span>
    <button class="notify" aria-label="Notificaciones"><svg class="i18" viewBox="0 0 18 18"><path d="M1 2.500h16v12h-5.500L9 17l-2.500-2.500H1Z" fill="none" stroke="#111" stroke-width="1.300"/></svg></button>
  </div>
</div>
</body>
</html>
```
FILE: styles.css
```css
* { box-sizing: border-box; }

body {
  margin: 0;
  height: 100vh;
  display: flex;
  flex-direction: column;
  overflow: hidden;
  font: 13px/20px "Open Sans", "Noto Sans", sans-serif;
  color: #1f2328;
  background: #fff;
}

button {
  font: inherit;
  color: inherit;
  margin: 0;
  padding: 0;
  border: 0;
  background: none;
}

a { color: inherit; text-decoration: none; }
h1, h2, p, ul { margin: 0; padding: 0; }
svg { display: block; flex: none; fill: currentColor; }

.sprite { position: absolute; width: 0; height: 0; }
.i14 { width: 14px; height: 14px; }
.i16 { width: 16px; height: 16px; }
.i18 { width: 18px; height: 18px; }
.i22 { width: 22px; height: 22px; }
.i26 { width: 26px; height: 26px; }
.i32 { width: 32px; height: 32px; }
.i34 { width: 34px; height: 34px; }
.dark { color: #1f2328; }

/* Browser window */
.tabstrip {
  flex: none;
  height: 34px;
  display: flex;
  align-items: stretch;
  padding-left: 8px;
  background: #dee1e6;
  font-size: 11px;
  color: #45494d;
}

.tab {
  width: 240px;
  display: flex;
  align-items: center;
  gap: 8px;
  padding: 0 8px 0 12px;
}

.tab-second { width: 238px; padding: 0 7px 0 13px; gap: 6px; background: linear-gradient(#80868b, #80868b) 0 8px / 1px 20px no-repeat; }
.tab-active { background: #fff; border-radius: 8px 8px 0 0; }

.tab-title { flex: 1; overflow: hidden; white-space: nowrap; }
.faded { mask-image: linear-gradient(90deg, #000 85%, transparent); }

.tab-close { color: #3c4043; }
.new-tab { width: 44px; display: grid; place-items: center; }
.window-controls { margin-left: auto; display: flex; }
.window-controls button { width: 46px; display: grid; place-items: center; padding-bottom: 6px; }

.toolbar {
  flex: none;
  height: 37px;
  display: flex;
  align-items: center;
  padding: 0 6px;
  border-bottom: 1px solid #d5d8dc;
  background: #fff;
}

.tool { width: 32px; display: grid; place-items: center; }

.omnibox {
  flex: 1;
  height: 28px;
  display: flex;
  align-items: center;
  gap: 16px;
  margin: 0 6px;
  padding: 0 10px 0 11px;
  border-radius: 14px;
  background: #f1f3f4;
}

.url { flex: 1; margin-left: -7px; font-family: "Noto Sans", sans-serif; color: #202124; }
.path { color: #686c71; }

.viewport { flex: 1; min-height: 0; display: flex; }
.page { flex: 1; overflow: hidden; }

.scrollbar { width: 17px; display: flex; flex-direction: column; background: #f1f1f1; }
.scrollbar svg { width: 17px; height: 17px; }
.track { flex: 1; padding: 0 2px; }
.thumb { height: 64%; background: #c1c1c1; }

/* Repository header */
.gh-header { padding: 15px 16px 0; border-bottom: 1px solid #d0d7de; background: #f6f8fa; color: #636c76; }
.gh-top { display: flex; align-items: center; gap: 8px; }

.box-btn {
  width: 32px;
  height: 32px;
  display: flex;
  align-items: center;
  justify-content: center;
  border: 1px solid #d0d7de;
  border-radius: 6px;
}

.create { width: 58px; gap: 8px; }
.logo { margin: 0 7px 0 9px; }
.crumbs { display: flex; align-items: center; color: #1f2328; }
.slash { margin: 0 9px 0 8px; color: #636c76; }
.strong { font-weight: 600; margin-right: 4px; }
.crumbs svg { color: #424a53; }

.search {
  width: 350px;
  height: 32px;
  margin-left: auto;
  display: flex;
  align-items: center;
  gap: 8px;
  padding: 0 7px;
  border: 1px solid #d0d7de;
  border-radius: 6px;
}

kbd { font: inherit; line-height: 14px; display: inline-block; padding: 0 3px; border: 1px solid #636c76; border-radius: 3px; }
.rule { width: 1px; height: 20px; margin: 0 4px; background: #d0d7de; }

.gh-nav { display: flex; gap: 9px; height: 54px; padding-top: 8px; }
.gh-nav a { display: flex; align-items: center; gap: 9px; padding: 0 8px; color: #1f2328; }
.gh-nav svg { color: #636c76; }
.gh-nav .current { gap: 8px; font-weight: 600; box-shadow: inset 0 -2px #fd8c73; }

/* Content */
.container { max-width: 1280px; margin: 0 auto; padding: 16px 32px; }

.repo-head { display: flex; align-items: center; padding: 0 8px 16px 0; border-bottom: 1px solid #d0d7de; color: #636c76; }
.repo-name { font-size: 19px; line-height: 30px; font-weight: 600; color: #1f2328; margin: 0 7px 0 6px; }
.pill { margin-right: auto; padding: 0 7px; border: 1px solid #d0d7de; border-radius: 10px; font-size: 11px; line-height: 18px; font-weight: 500; }

.split { display: flex; margin-left: 8px; }

.small-btn {
  height: 28px;
  display: flex;
  align-items: center;
  gap: 6px;
  padding: 0 12px;
  border: 1px solid #d0d7de;
  border-radius: 6px 0 0 6px;
  background: #f6f8fa;
  color: #1f2328;
  font-size: 11px;
  font-weight: 600;
}

.small-btn svg { margin-right: 4px; color: #636c76; }
.small-btn:disabled { border-color: #eef1f4; background: #eef1f4; color: #8c959f; }
.small-btn:disabled svg { color: #8c959f; }
.small-btn.drop { width: 34px; justify-content: center; padding: 0; margin-left: -1px; border-radius: 0 6px 6px 0; }
.small-btn.drop svg { margin: 0; }
.count { min-width: 20px; border-radius: 10px; background: #e6eaee; text-align: center; line-height: 20px; }

.columns { display: flex; gap: 24px; padding-top: 24px; }
.main { flex: 1; min-width: 0; }
.side { width: 296px; }

.actions { display: flex; align-items: center; gap: 8px; margin-bottom: 16px; }

.btn {
  height: 32px;
  display: flex;
  align-items: center;
  gap: 8px;
  padding: 0 12px;
  border: 1px solid #d0d7de;
  border-radius: 6px;
  background: #f6f8fa;
  font-weight: 600;
}

.btn svg { color: #636c76; }
.add { margin-left: auto; font-size: 14px; font-weight: 500; }
.add, .primary { padding-right: 8px; }
.primary { border-color: #1f7a37; background: #1f883d; color: #fff; }
.primary svg { color: #fff; }
.ref-link { display: flex; align-items: center; gap: 4px; font-weight: 600; color: #636c76; }
.branches { margin-left: 5px; }

.panel { border: 1px solid #d0d7de; border-radius: 6px; overflow: hidden; }

.files { width: 100%; border-collapse: collapse; table-layout: fixed; }
.c-name { width: 373px; }
.c-date { width: 120px; }
.files th { height: 52px; padding: 0 21px; background: #f6f8fa; font-weight: 500; }
.files td { height: 41px; padding: 0; border-top: 1px solid #d0d7de; }
.files .name a { display: flex; align-items: center; gap: 10px; padding-left: 16px; }
.files .msg { padding-right: 16px; }
.files .date { padding-right: 1px; }
.files svg { color: #636c76; }
.skeleton { height: 13px; border-radius: 3px; background: #f7f9fa; }
.commits { display: flex; align-items: center; justify-content: flex-end; gap: 4px; font-size: 12px; }

.readme { margin-top: 16px; }
.readme-head { display: flex; align-items: center; border-bottom: 1px solid #d0d7de; color: #636c76; }
.readme-tabs { flex: 1; padding: 0 8px; border-bottom: 1px solid #d8dee4; }
.readme-tabs a { display: inline-flex; align-items: center; gap: 8px; height: 48px; margin-bottom: -1px; padding: 0 8px; border-bottom: 2px solid #fd8c73; color: #1f2328; font-size: 14px; font-weight: 500; vertical-align: top; }
.readme-tabs svg { color: #636c76; }
.readme-head button { margin: 0 22px 0 6px; }
article { padding: 32px; }
h1 { padding-bottom: 8px; margin-bottom: 16px; border-bottom: 1px solid #d8dee4; font-size: 30px; line-height: 42px; font-weight: 600; }

/* Sidebar */
.side section { padding-bottom: 16px; margin-bottom: 16px; border-bottom: 1px solid #d8dee4; }
.side h2 { margin-bottom: 16px; font-size: 15px; line-height: 24px; font-weight: 600; }
.about-head { display: flex; justify-content: space-between; padding-top: 4px; color: #636c76; }
.about-head h2 { color: #1f2328; }
.about-head button { align-self: flex-start; padding-top: 4px; }
.desc { margin-bottom: 17px; font-family: "Noto Sans", sans-serif; font-size: 15px; line-height: 24px; font-style: italic; color: #636c76; }
.facts { list-style: none; color: #636c76; }
.facts li { margin-top: 8px; line-height: 21px; }
.facts a { display: flex; align-items: center; gap: 12px; }
b { font-weight: 600; }
.note { font-size: 11px; line-height: 18px; color: #636c76; }
.link { display: table; border-bottom: 1px solid #0969da; font-size: 11px; line-height: 17px; color: #0969da; }
.note, .link { font-family: "Noto Sans", sans-serif; }
.bar { height: 8px; margin-bottom: 8px; border-radius: 6px; background: #e34c26; }
.lang { display: flex; align-items: center; gap: 4px; font-size: 11px; line-height: 20px; color: #636c76; }
.lang b { color: #1f2328; }
.dot { width: 8px; height: 8px; margin: 0 8px 0 4px; border-radius: 50%; background: #e34c26; }
.side .langs { padding-bottom: 18px; }

/* Desktop taskbar */
.taskbar {
  flex: none;
  height: 40px;
  display: flex;
  background: linear-gradient(90deg, #ebebeb 0 78%, #dcefdc 88%, #e9eee9 93%, #ebebeb);
  color: #111;
  font-size: 14px;
}

.start { width: 48px; display: grid; place-items: center; }

.task-search {
  width: 288px;
  display: flex;
  align-items: center;
  gap: 10px;
  padding-left: 11px;
  border: 1px solid #c4c4c4;
  background: #fff;
}

.lagoon { width: 80px; height: 32px; margin-left: auto; align-self: flex-end; }

.apps { display: flex; padding-left: 2px; }
.apps button { width: 49px; display: grid; place-items: center; }
.apps svg { width: 24px; height: 24px; }
.open { background: linear-gradient(#0078d7, #0078d7) 50% 100% / 48px 2px no-repeat; }
.open.inset { background-size: 40px 2px; }
.apps .active { background-color: #f9f9f9; }

.tray { margin-left: auto; display: flex; align-items: center; gap: 8px; padding-right: 4px; }
.weather { width: 24px; height: 24px; }
.temp { margin-left: 2px; }
.sky { margin-right: 16px; }
.temp, .sky { font-size: 13px; }
.lang-code { margin-left: 5px; font-size: 11px; }
.clock { margin-left: 7px; text-align: center; font-size: 11px; line-height: 18px; }
.notify { margin-left: 8px; padding: 11px 19px 11px 0; border-right: 1px solid #b5b5b5; }
```
